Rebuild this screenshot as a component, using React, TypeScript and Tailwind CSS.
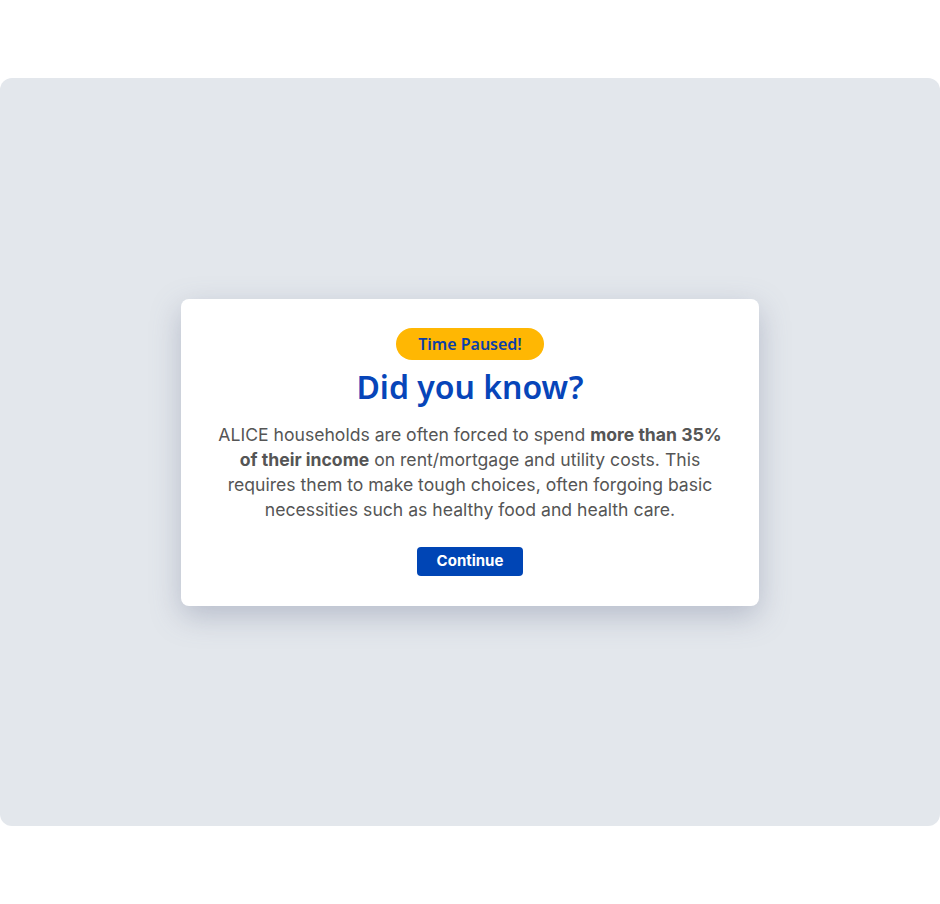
export default function App() {
  return (
    <div className="min-h-[904px] w-[940px] bg-white pt-[78px]" style={{ fontFamily: 'Inter, "Liberation Sans", sans-serif' }}>
      <div className="flex h-[748px] w-full items-center justify-center rounded-[12px] bg-[#e3e7ec]">
        <div className="flex w-[578px] flex-col items-center rounded-[8px] bg-white px-[30px] pt-[29px] pb-[30px] shadow-[0_10px_30px_rgba(100,110,140,0.35)]">
          <span className="rounded-full bg-[#ffb703] px-[22px] py-[4px] text-[16px] leading-[24px] font-semibold text-[#0b3fa8] [font-family:'Noto_Sans',sans-serif]">
            Time Paused!
          </span>
          <h1 className="mt-[5px] text-[32px] leading-[44px] font-semibold text-[#0745b9] [font-family:'Noto_Sans',sans-serif]">
            Did you know?
          </h1>
          <p className="mt-[13px] text-center text-[17.6px] leading-[25px] text-[#555555]">
            ALICE households are often forced to spend <strong className="font-bold">more than 35% of their income</strong> on rent/mortgage and utility costs. This requires them to make tough choices, often forgoing basic necessities such as healthy food and health care.
          </p>
          <button className="mt-[25px] h-[29px] w-[106px] rounded-[4px] bg-[#0045b5] text-[15px] font-bold text-white">
            Continue
          </button>
        </div>
      </div>
    </div>
  );
}
